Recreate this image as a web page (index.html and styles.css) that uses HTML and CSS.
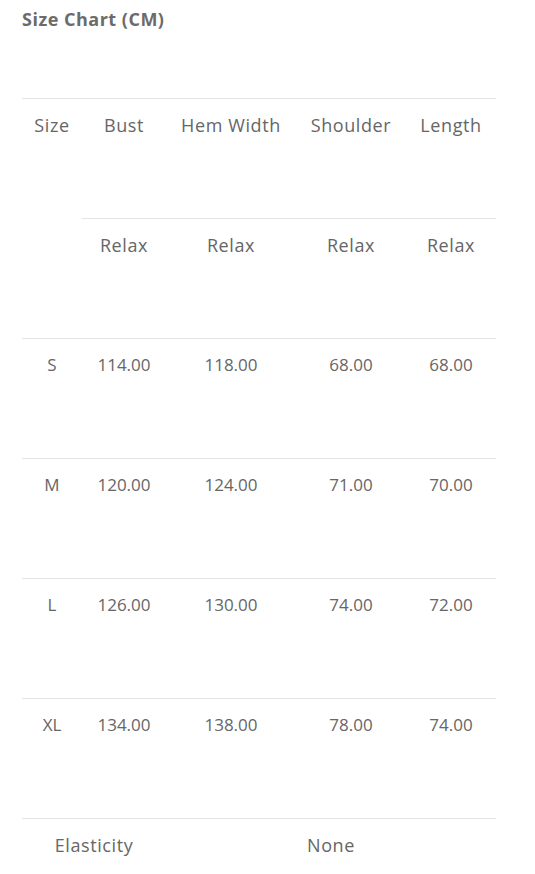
FILE: index.html
```html
<!DOCTYPE html>
<html lang="en">
<head>
  <meta charset="UTF-8">
  <title>Size Chart</title>
  <link rel="stylesheet" href="styles.css">
</head>
<body>
  <div class="chart">
    <h3 class="chart-title">Size Chart (CM)</h3>
    <table class="size-table">
      <tr class="row-label">
        <td rowspan="2" class="col-size">Size</td>
        <td class="col-bust">Bust</td>
        <td class="col-hem">Hem Width</td>
        <td class="col-shoulder">Shoulder</td>
        <td class="col-length">Length</td>
      </tr>
      <tr class="row-label">
        <td>Relax</td>
        <td>Relax</td>
        <td>Relax</td>
        <td>Relax</td>
      </tr>
      <tr>
        <td>S</td>
        <td>114.00</td>
        <td>118.00</td>
        <td>68.00</td>
        <td>68.00</td>
      </tr>
      <tr>
        <td>M</td>
        <td>120.00</td>
        <td>124.00</td>
        <td>71.00</td>
        <td>70.00</td>
      </tr>
      <tr>
        <td>L</td>
        <td>126.00</td>
        <td>130.00</td>
        <td>74.00</td>
        <td>72.00</td>
      </tr>
      <tr>
        <td>XL</td>
        <td>134.00</td>
        <td>138.00</td>
        <td>78.00</td>
        <td>74.00</td>
      </tr>
      <tr class="row-label">
        <td colspan="2">Elasticity</td>
        <td colspan="3">None</td>
      </tr>
    </table>
  </div>
</body>
</html>
```

FILE: styles.css
```css
body {
  margin: 0;
  font-family: "Open Sans", Arial, sans-serif;
  color: #666;
  background: #fff;
}
.chart {
  padding: 8px 22px 0;
}
.chart-title {
  margin: 0;
  font-size: 18px;
  line-height: 22px;
  font-weight: 700;
  letter-spacing: 0.5px;
  color: #6b6b6b;
}
.size-table {
  margin-top: 68px;
  width: 474px;
  border-collapse: collapse;
  table-layout: fixed;
  font-size: 17px;
}
.size-table tr {
  height: 120px;
}
.size-table td {
  border-top: 1px solid #e3e3e3;
  vertical-align: top;
  text-align: center;
  padding: 15px 0 0;
  line-height: 22px;
  color: #666;
}
.row-label td {
  font-size: 18px;
  letter-spacing: 0.6px;
}
.col-size { width: 60px; }
.col-bust { width: 84px; }
.col-hem { width: 130px; }
.col-shoulder { width: 110px; }
.col-length { width: 90px; }
```
